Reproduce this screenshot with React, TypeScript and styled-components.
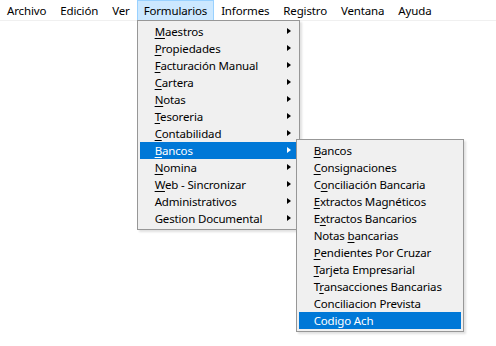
import React from 'react'
import styled, { createGlobalStyle } from 'styled-components'

const GlobalStyle = createGlobalStyle`
  html, body {
    margin: 0;
    padding: 0;
    background: #ffffff;
  }
  body {
    font-family: 'Noto Sans', 'Open Sans', sans-serif;
    font-size: 11.5px;
    letter-spacing: -0.15px;
    color: #000000;
  }
`

interface Entry {
  label: string
  mnemonic?: number
  submenu?: boolean
}

const topMenus = ['Archivo', 'Edición', 'Ver', 'Formularios', 'Informes', 'Registro', 'Ventana', 'Ayuda']

const formularios: Entry[] = [
  { label: 'Maestros', mnemonic: 0, submenu: true },
  { label: 'Propiedades', mnemonic: 0, submenu: true },
  { label: 'Facturación Manual', mnemonic: 0, submenu: true },
  { label: 'Cartera', mnemonic: 0, submenu: true },
  { label: 'Notas', mnemonic: 0, submenu: true },
  { label: 'Tesoreria', mnemonic: 0, submenu: true },
  { label: 'Contabilidad', mnemonic: 0, submenu: true },
  { label: 'Bancos', mnemonic: 0, submenu: true },
  { label: 'Nomina', mnemonic: 0, submenu: true },
  { label: 'Web - Sincronizar', mnemonic: 0, submenu: true },
  { label: 'Administrativos', submenu: true },
  { label: 'Gestion Documental', submenu: true },
]

const bancos: Entry[] = [
  { label: 'Bancos', mnemonic: 0 },
  { label: 'Consignaciones', mnemonic: 0 },
  { label: 'Conciliación Bancaria', mnemonic: 1 },
  { label: 'Extractos Magnéticos', mnemonic: 0 },
  { label: 'Extractos Bancarios', mnemonic: 1 },
  { label: 'Notas bancarias', mnemonic: 6 },
  { label: 'Pendientes Por Cruzar', mnemonic: 0 },
  { label: 'Tarjeta Empresarial', mnemonic: 0 },
  { label: 'Transacciones Bancarias', mnemonic: 1 },
  { label: 'Conciliacion Prevista' },
  { label: 'Codigo Ach' },
]

const Screen = styled.div`
  position: relative;
  width: 100%;
  height: 346px;
  background: #ffffff;
`

const MenuBar = styled.div`
  display: flex;
  height: 20px;
  border-bottom: 1px solid #f0f0f0;
  background: #ffffff;
`

const BarItem = styled.div<{ $open?: boolean }>`
  position: relative;
  display: flex;
  align-items: center;
  height: 20px;
  padding: 0 6px;
  box-sizing: border-box;
  border: 1px solid ${(p) => (p.$open ? '#99d1ff' : 'transparent')};
  border-bottom: none;
  background: ${(p) => (p.$open ? '#cce8ff' : 'transparent')};
  white-space: nowrap;
`

const Dropdown = styled.div<{ $width: number }>`
  position: absolute;
  left: -1px;
  top: 19px;
  width: ${(p) => p.$width}px;
  box-sizing: border-box;
  padding: 2px;
  display: flex;
  flex-direction: column;
  background: #f0f0f0;
  border: 1px solid #979797;
  box-shadow: 2px 2px 2px rgba(0, 0, 0, 0.12);
  z-index: 10;
`

const SubDropdown = styled(Dropdown)`
  left: calc(100% - 1px);
  top: -3px;
  z-index: 20;
`

const Item = styled.div<{ $active?: boolean }>`
  position: relative;
  display: flex;
  align-items: center;
  height: 17px;
  flex: none;
  padding-left: 15px;
  color: ${(p) => (p.$active ? '#ffffff' : '#000000')};
  background: ${(p) => (p.$active ? '#0078d7' : 'transparent')};
  white-space: nowrap;
`

const Arrow = styled.span<{ $active?: boolean }>`
  position: absolute;
  right: 6px;
  top: 5px;
  width: 0;
  height: 0;
  border-top: 3.5px solid transparent;
  border-bottom: 3.5px solid transparent;
  border-left: 4px solid ${(p) => (p.$active ? '#ffffff' : '#000000')};
`

const Mnemonic = styled.span`
  text-decoration: underline;
  text-underline-offset: 2px;
`

const Label = ({ text, mnemonic }: { text: string; mnemonic?: number }) => {
  if (mnemonic === undefined) return <span>{text}</span>
  return (
    <span>
      {text.slice(0, mnemonic)}
      <Mnemonic>{text[mnemonic]}</Mnemonic>
      {text.slice(mnemonic + 1)}
    </span>
  )
}

const BancosMenu = () => (
  <SubDropdown $width={168}>
    {bancos.map((e) => (
      <Item key={e.label} $active={e.label === 'Codigo Ach'}>
        <Label text={e.label} mnemonic={e.mnemonic} />
      </Item>
    ))}
  </SubDropdown>
)

const FormulariosMenu = () => (
  <Dropdown $width={163}>
    {formularios.map((e) => {
      const active = e.label === 'Bancos'
      return (
        <Item key={e.label} $active={active}>
          <Label text={e.label} mnemonic={e.mnemonic} />
          {e.submenu && <Arrow $active={active} />}
          {active && <BancosMenu />}
        </Item>
      )
    })}
  </Dropdown>
)

export default function App() {
  return (
    <Screen>
      <GlobalStyle />
      <MenuBar>
        {topMenus.map((m) => (
          <BarItem key={m} $open={m === 'Formularios'}>
            {m}
            {m === 'Formularios' && <FormulariosMenu />}
          </BarItem>
        ))}
      </MenuBar>
    </Screen>
  )
}
